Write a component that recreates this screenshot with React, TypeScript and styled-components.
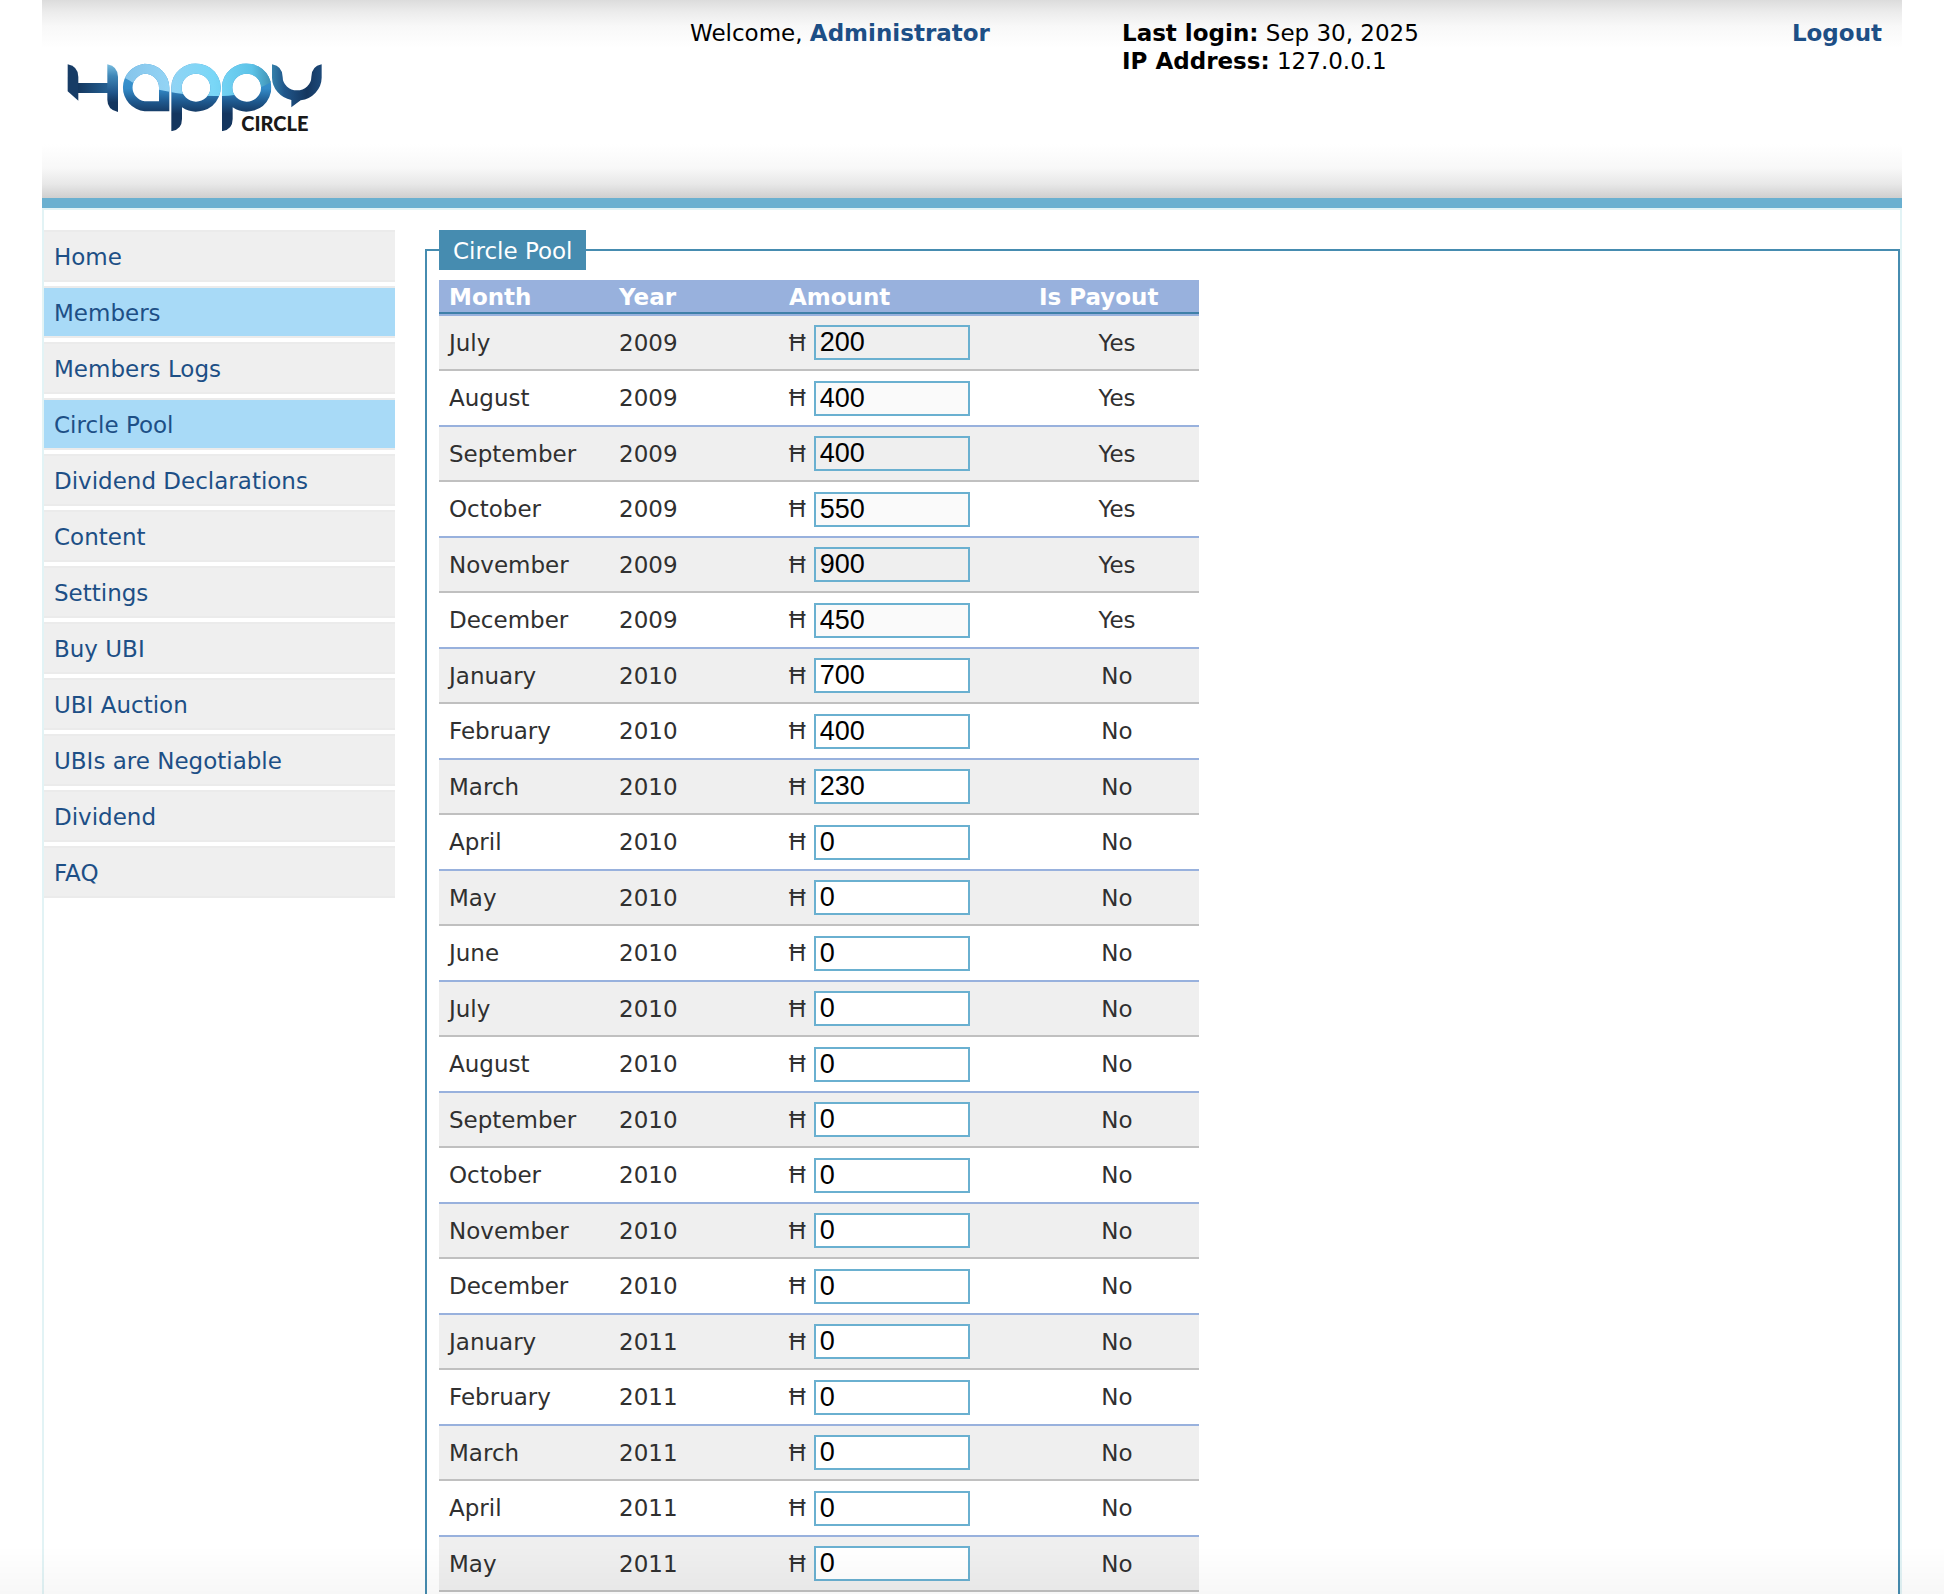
import React, { useState } from "react";
import styled, { createGlobalStyle } from "styled-components";

const sans = `Verdana, "DejaVu Sans", sans-serif`;
const arial = `Arial, "Liberation Sans", sans-serif`;

const GlobalStyle = createGlobalStyle`
  *, *::before, *::after { box-sizing: border-box; }
  body {
    margin: 0;
    background: #fff;
    color: #000;
    font: 23px/28px ${sans};
  }
  a { color: #1d4f86; text-decoration: none; }
`;

const Page = styled.div`
  display: flex;
  flex-direction: column;
  min-height: 100vh;
  padding: 0 42px;
`;

const Header = styled.header`
  display: grid;
  grid-template-columns: 157fr 108fr 190fr;
  height: 208px;
  padding: 19px 20px 0;
  border-bottom: 10px solid #6ab0d0;
  background: linear-gradient(
    #dcdcdc 0,
    #ececec 12px,
    #f8f8f8 26px,
    #fff 48px,
    #fff 144px,
    #f8f8f8 168px,
    #e8e8e8 184px,
    #cfcfcf 198px
  );
`;

const LogoLink = styled.a`
  display: block;
  padding-top: 38px;
`;

const HeaderEnd = styled.div`
  display: flex;
  justify-content: space-between;
  align-items: flex-start;
`;

const StrongLink = styled.a`
  font-weight: bold;
`;

const Body = styled.div`
  flex: 1;
  display: flex;
  gap: 30px;
  padding-top: 20px;
  border: 2px solid #e2f3f5;
  border-bottom: 0;
`;

const Sidebar = styled.nav`
  flex: 0 0 351px;
`;

const Menu = styled.ul`
  display: flex;
  flex-direction: column;
  gap: 4px;
  margin: 0;
  padding: 0;
  list-style: none;
`;

const MenuLink = styled.a<{ $active: boolean }>`
  display: block;
  padding: 11px 10px 9px;
  border: solid #ebebeb;
  border-width: 2px 0;
  background: ${(p) => (p.$active ? "#a8daf7" : "#efefef")};
`;

const Panel = styled.fieldset`
  flex: 1;
  min-width: 0;
  margin: 0;
  padding: 0 12px;
  border: 2px solid #468cb0;
  border-bottom: 0;
`;

const PanelTitle = styled.legend`
  padding: 7px 14px 5px;
  background: #468cb0;
  color: #fff;
`;

const Table = styled.table`
  width: 760px;
  margin-top: 10px;
  border-collapse: separate;
  border-spacing: 0;
  table-layout: fixed;
  color: #303030;
`;

const HeadCell = styled.th<{ $width: number }>`
  width: ${(p) => p.$width}px;
  height: 36px;
  padding: 0 10px;
  border-bottom: 2px solid #98b1dd;
  background: #98b1dd;
  box-shadow: inset 0 -2px 0 #3f80a8;
  color: #fff;
  text-align: left;
`;

const Row = styled.tr<{ $odd: boolean }>`
  height: ${(p) => (p.$odd ? 55 : 56)}px;
  background: ${(p) => (p.$odd ? "#efefef" : "#fff")};
  & > td {
    border-bottom: 2px solid ${(p) => (p.$odd ? "#c0c0c0" : "#98b1dd")};
  }
`;

const Cell = styled.td`
  padding: 0 10px;
`;

const PayoutCell = styled(Cell)`
  padding-left: 16px;
  text-align: center;
`;

const Amount = styled.label`
  display: flex;
  align-items: center;
  gap: 8px;
  font-family: ${arial};
`;

const AmountInput = styled.input`
  width: 156px;
  height: 35px;
  padding: 0 4px;
  border: 2px solid #6ab0d0;
  border-radius: 0;
  outline: 0;
  background: #fff;
  color: #000;
  font: 27px/31px ${arial};
  &:read-only {
    background: rgba(239, 239, 239, 0.3);
  }
`;

const BottomShade = styled.div`
  position: fixed;
  inset: auto 0 0;
  height: 48px;
  background: linear-gradient(rgba(0, 0, 0, 0), rgba(0, 0, 0, 0.03));
  pointer-events: none;
`;

const menu = [
  "Home",
  "Members",
  "Members Logs",
  "Circle Pool",
  "Dividend Declarations",
  "Content",
  "Settings",
  "Buy UBI",
  "UBI Auction",
  "UBIs are Negotiable",
  "Dividend",
  "FAQ",
];
const activeItems = ["Members", "Circle Pool"];

const months = [
  "January", "February", "March", "April", "May", "June",
  "July", "August", "September", "October", "November", "December",
];
const amounts = [200, 400, 400, 550, 900, 450, 700, 400, 230];
const paidMonths = 6;

// The pool opens in July 2009 and runs month by month.
const pool = Array.from({ length: 23 }, (_, i) => ({
  month: months[(i + 6) % 12],
  year: 2009 + Math.floor((i + 6) / 12),
  amount: amounts[i] ?? 0,
  paid: i < paidMonths,
}));

function Logo() {
  return (
    <svg width="270" height="80" viewBox="0 0 810 240" role="img" aria-label="Happy Circle">
      <defs>
        <linearGradient id="deep" x1="0" y1="20" x2="0" y2="170" gradientUnits="userSpaceOnUse">
          <stop offset="0" stopColor="#3f9fd8" />
          <stop offset="0.5" stopColor="#348bc8" />
          <stop offset="0.75" stopColor="#1f5a90" />
          <stop offset="1" stopColor="#14365f" />
        </linearGradient>
        <linearGradient id="gloss" x1="174" y1="0" x2="640" y2="0" gradientUnits="userSpaceOnUse">
          <stop offset="0" stopColor="#84c3ea" />
          <stop offset="0.3" stopColor="#93d3f4" />
          <stop offset="0.6" stopColor="#7ad7f7" />
          <stop offset="0.85" stopColor="#5cc3e8" />
          <stop offset="1" stopColor="#3a86a8" />
        </linearGradient>
        <linearGradient id="bar" x1="49" y1="0" x2="168" y2="0" gradientUnits="userSpaceOnUse">
          <stop offset="0" stopColor="#153860" />
          <stop offset="1" stopColor="#2a6da3" />
        </linearGradient>
        <linearGradient id="post" x1="0" y1="20" x2="0" y2="165" gradientUnits="userSpaceOnUse">
          <stop offset="0" stopColor="#7cc0e2" />
          <stop offset="0.25" stopColor="#4088b8" />
          <stop offset="0.6" stopColor="#20558a" />
          <stop offset="0.8" stopColor="#14365f" />
        </linearGradient>
        <linearGradient id="arm" x1="630" y1="0" x2="780" y2="0" gradientUnits="userSpaceOnUse">
          <stop offset="0" stopColor="#3580aa" />
          <stop offset="0.25" stopColor="#20568a" />
          <stop offset="0.7" stopColor="#14365f" />
          <stop offset="1" stopColor="#1d4a7a" />
        </linearGradient>
        <clipPath id="bowls">
          <path
            clipRule="evenodd"
            d="M248 20A74 72 0 0 1 322 92V163H248A74 72 0 0 1 248 20ZM248 50A43 42 0 0 0 248 133H291V92A43 42 0 0 0 248 50Z"
          />
          <path
            clipRule="evenodd"
            d="M328 92A74 72 0 1 1 360 151V186Q360 218 328 223ZM445 92A43 42 0 1 0 359 92A43 42 0 1 0 445 92Z"
          />
          <path
            clipRule="evenodd"
            d="M480 92A74 72 0 1 1 512 151V186Q512 218 480 223ZM597 92A43 42 0 1 0 511 92A43 42 0 1 0 597 92Z"
          />
        </clipPath>
      </defs>
      <path fill="#173c66" d="M17 22Q49 28 49 60V131L17 103Z" />
      <path fill="url(#bar)" d="M48 78H138V108H48Z" />
      <path fill="url(#post)" d="M136 22Q168 28 168 60V165Q136 158 136 128Z" />
      <g clipPath="url(#bowls)">
        <rect x="170" y="16" width="464" height="210" fill="url(#deep)" />
        <path
          fill="url(#gloss)"
          d="M170 55Q200 68 210 76L291 98Q400 122 500 116Q575 108 632 72V16H170Z"
        />
      </g>
      <path
        fill="url(#arm)"
        d="M630 22Q662 28 662 60A43 40 0 0 0 748 60Q748 28 779 22V62A74 70 0 0 1 716 130L688 151V129A74 70 0 0 1 630 62Z"
      />
      <text x="538" y="222" fill="#191919" fontFamily="Lato, sans-serif" fontSize="60" fontWeight="900">
        CIRCLE
      </text>
    </svg>
  );
}

function PoolRow({ entry, odd }: { entry: (typeof pool)[number]; odd: boolean }) {
  const [value, setValue] = useState(String(entry.amount));
  return (
    <Row $odd={odd}>
      <Cell>{entry.month}</Cell>
      <Cell>{entry.year}</Cell>
      <Cell>
        <Amount>
          Ħ
          <AmountInput
            type="text"
            value={value}
            readOnly={entry.paid}
            onChange={(e) => setValue(e.target.value)}
          />
        </Amount>
      </Cell>
      <PayoutCell>{entry.paid ? "Yes" : "No"}</PayoutCell>
    </Row>
  );
}

export default function App() {
  return (
    <>
      <GlobalStyle />
      <Page>
        <Header>
          <LogoLink href="#home">
            <Logo />
          </LogoLink>
          <div>
            Welcome, <StrongLink href="#profile">Administrator</StrongLink>
          </div>
          <HeaderEnd>
            <div>
              <strong>Last login:</strong> Sep 30, 2025
              <br />
              <strong>IP Address:</strong> 127.0.0.1
            </div>
            <StrongLink href="#logout">Logout</StrongLink>
          </HeaderEnd>
        </Header>
        <Body>
          <Sidebar>
            <Menu>
              {menu.map((item) => (
                <li key={item}>
                  <MenuLink href="#" $active={activeItems.includes(item)}>
                    {item}
                  </MenuLink>
                </li>
              ))}
            </Menu>
          </Sidebar>
          <Panel>
            <PanelTitle>Circle Pool</PanelTitle>
            <Table>
              <thead>
                <tr>
                  <HeadCell $width={170}>Month</HeadCell>
                  <HeadCell $width={170}>Year</HeadCell>
                  <HeadCell $width={250}>Amount</HeadCell>
                  <HeadCell $width={170}>Is Payout</HeadCell>
                </tr>
              </thead>
              <tbody>
                {pool.map((entry, i) => (
                  <PoolRow key={i} entry={entry} odd={i % 2 === 0} />
                ))}
              </tbody>
            </Table>
          </Panel>
        </Body>
      </Page>
      <BottomShade />
    </>
  );
}
